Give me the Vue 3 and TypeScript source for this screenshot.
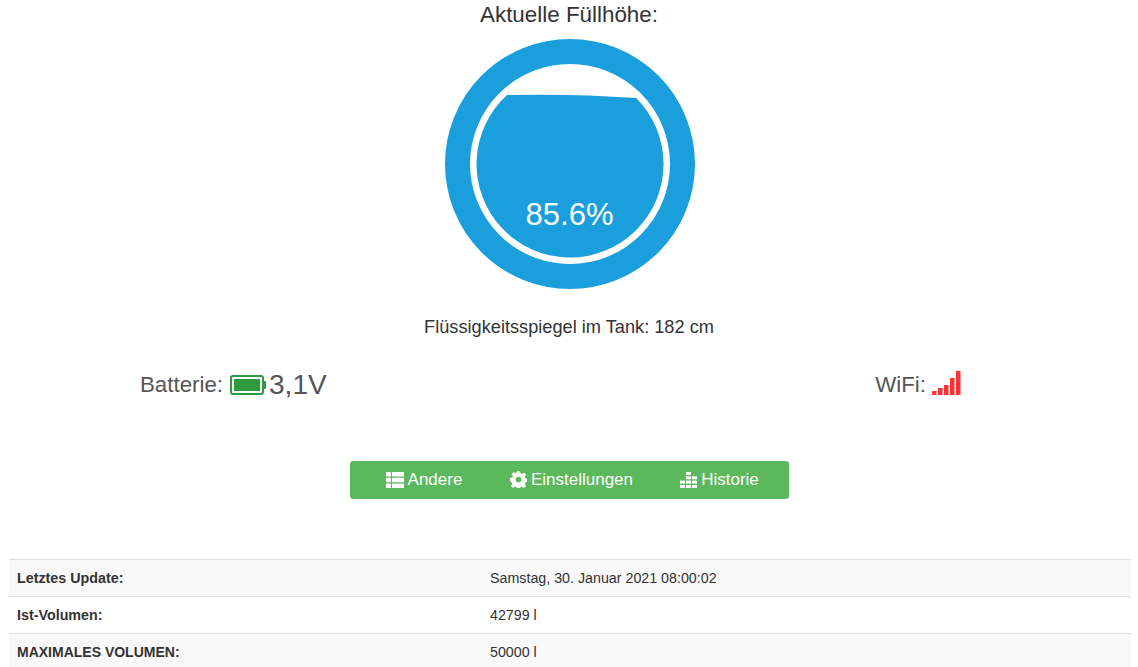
<script setup lang="ts">
const rows = [
  { label: 'Letztes Update:', value: 'Samstag, 30. Januar 2021 08:00:02' },
  { label: 'Ist-Volumen:', value: '42799 l' },
  { label: 'MAXIMALES VOLUMEN:', value: '50000 l' },
]
const wifiBars = [
  { x: 0, h: 4 },
  { x: 6, h: 7 },
  { x: 12, h: 10 },
  { x: 18, h: 17 },
  { x: 24, h: 24 },
]
</script>

<template>
  <div class="page">
    <h3 class="title">Aktuelle Füllhöhe:</h3>
    <svg class="gauge" width="250" height="250" viewBox="0 0 250 250">
      <circle cx="125" cy="125" r="112.5" fill="none" stroke="#1b9fdc" stroke-width="25" />
      <path
        d="M62 56 Q130 54.500 191.200 59 A93.500 93.500 0 1 1 62 56 Z"
        fill="#1b9fdc"
      />
      <text x="124.500" y="186" text-anchor="middle" class="pct">85.6%</text>
    </svg>
    <p class="level">Flüssigkeitsspiegel im Tank: 182 cm</p>

    <div class="status">
      <div class="stat bat">
        <span>Batterie:</span>
        <svg class="bat-ico" width="37" height="20" viewBox="0 0 37 20">
          <rect x="1" y="1" width="32" height="18" rx="2" fill="none" stroke="#2e9a3e" stroke-width="2" />
          <rect x="4" y="4" width="26" height="12" fill="#2e9a3e" />
          <path d="M34 6h1a1 1 0 0 1 1 1v6a1 1 0 0 1-1 1h-1z" fill="#2e9a3e" />
        </svg>
        <span class="volt">3,1V</span>
      </div>
      <div class="stat wifi">
        <span>WiFi:</span>
        <svg class="wifi-ico" width="29" height="24" viewBox="0 0 29 24">
          <rect v-for="b in wifiBars" :key="b.x" :x="b.x" :y="24 - b.h" width="4.500" :height="b.h" fill="#f33" />
        </svg>
      </div>
    </div>

    <div class="btns">
      <button class="btn b1">
        <svg width="18" height="16" viewBox="0 0 18 16" fill="#fff">
          <rect x="0" y="0" width="5" height="4.500" rx=".6" />
          <rect x="6" y="0" width="12" height="4.500" rx=".6" />
          <rect x="0" y="5.750" width="5" height="4.500" rx=".6" />
          <rect x="6" y="5.750" width="12" height="4.500" rx=".6" />
          <rect x="0" y="11.500" width="5" height="4.500" rx=".6" />
          <rect x="6" y="11.500" width="12" height="4.500" rx=".6" />
        </svg>
        Andere
      </button>
      <button class="btn b2">
        <svg width="17" height="17" viewBox="0 0 24 24" fill="#fff">
          <path fill-rule="evenodd" d="M10 0h4l.7 3.300 2.300 1 2.900-1.800 2.800 2.800-1.800 2.900 1 2.300 3.100.7v4l-3.100.7-1 2.300 1.800 2.900-2.800 2.800-2.900-1.800-2.300 1-.7 3.100h-4l-.7-3.100-2.300-1-2.900 1.800-2.800-2.800 1.800-2.900-1-2.300L0 14v-4l3.100-.7 1-2.300-1.800-2.900 2.800-2.800L7 3.100l2.300-.9zM12 8a4 4 0 1 0 0 8 4 4 0 0 0 0-8z" />
        </svg>
        Einstellungen
      </button>
      <button class="btn b3">
        <svg width="17" height="16" viewBox="0 0 17 16" fill="#fff">
          <rect x="6" y="0" width="5" height="3" />
          <rect x="6" y="4.300" width="5" height="3" />
          <rect x="12" y="4.300" width="5" height="3" />
          <rect x="6" y="8.600" width="5" height="3" />
          <rect x="12" y="8.600" width="5" height="3" />
          <rect x="0" y="8.600" width="5" height="3" />
          <rect x="0" y="13" width="5" height="3" />
          <rect x="6" y="13" width="5" height="3" />
          <rect x="12" y="13" width="5" height="3" />
        </svg>
        Historie
      </button>
    </div>

    <div class="table">
      <div v-for="(r, i) in rows" :key="r.label" class="row" :class="{ odd: i % 2 === 0 }">
        <div class="k">{{ r.label }}</div>
        <div class="v">{{ r.value }}</div>
      </div>
    </div>
  </div>
</template>

<style>
html, body { margin: 0; background: #fff; overflow: hidden; }
</style>

<style scoped>
.page {
  height: 667px;
  overflow: hidden;
  font-family: "Liberation Sans", Arial, sans-serif;
  font-size: 14px;
  color: #333;
  display: flex;
  flex-direction: column;
  align-items: center;
}
.page > * { flex: none; }
.title {
  margin: 0;
  height: 39px;
  line-height: 30px;
  font-size: 22.400px;
  font-weight: 400;
}
.gauge { display: block; margin-left: 2px; }
.pct { font-size: 31px; fill: #fff; font-family: "Liberation Sans", Arial, sans-serif; }
.level {
  margin: 27px 0 0;
  line-height: 22px;
  font-size: 18.200px;
  height: 22px;
}
.status {
  margin-top: 27px;
  align-self: stretch;
  display: flex;
  justify-content: space-between;
  height: 40px;
  padding: 0 177px 0 140px;
  color: #555;
}
.stat { display: flex; align-items: center; font-size: 22.300px; }
.bat-ico { margin: 0 2px 0 7px; }
.volt { font-size: 28px; }
.wifi-ico { margin-left: 6px; margin-top: -4px; }
.btns {
  margin-top: 56px;
  display: flex;
  height: 38px;
}
.btn {
  position: relative;
  display: flex;
  align-items: center;
  justify-content: center;
  gap: 4px;
  border: 0;
  background: #5cb85c;
  color: #fff;
  font: 17px "Liberation Sans", Arial, sans-serif;
  padding: 0;
}
.btn svg { margin-top: -1px; }
.b2::before,
.b3::before,
.b2::after,
.b3::after {
  content: "";
  position: absolute;
  left: 0;
  width: 1px;
  height: 1px;
  background: #4cae4c;
}
.b2::before, .b3::before { top: 0; }
.b2::after, .b3::after { bottom: 0; }
.b1 { width: 147px; border-radius: 3px 0 0 3px; padding-left: 2px; }
.b2 { width: 148px; padding-left: 2px; }
.b3 { width: 144px; border-radius: 0 3px 3px 0; padding-left: 6px; }
.table {
  margin-top: 60px;
  align-self: stretch;
  margin-left: 9px;
  margin-right: 7px;
}
.row {
  display: flex;
  height: 36px;
  border-top: 1px solid #ddd;
  align-items: center;
}
.row.odd { background: #f9f9f9; }
.k { width: 473px; padding-left: 8px; font-weight: 700; font-size: 14.300px; }
.row:last-child .k { font-size: 14px; }
.v { font-size: 14.250px; }
</style>
